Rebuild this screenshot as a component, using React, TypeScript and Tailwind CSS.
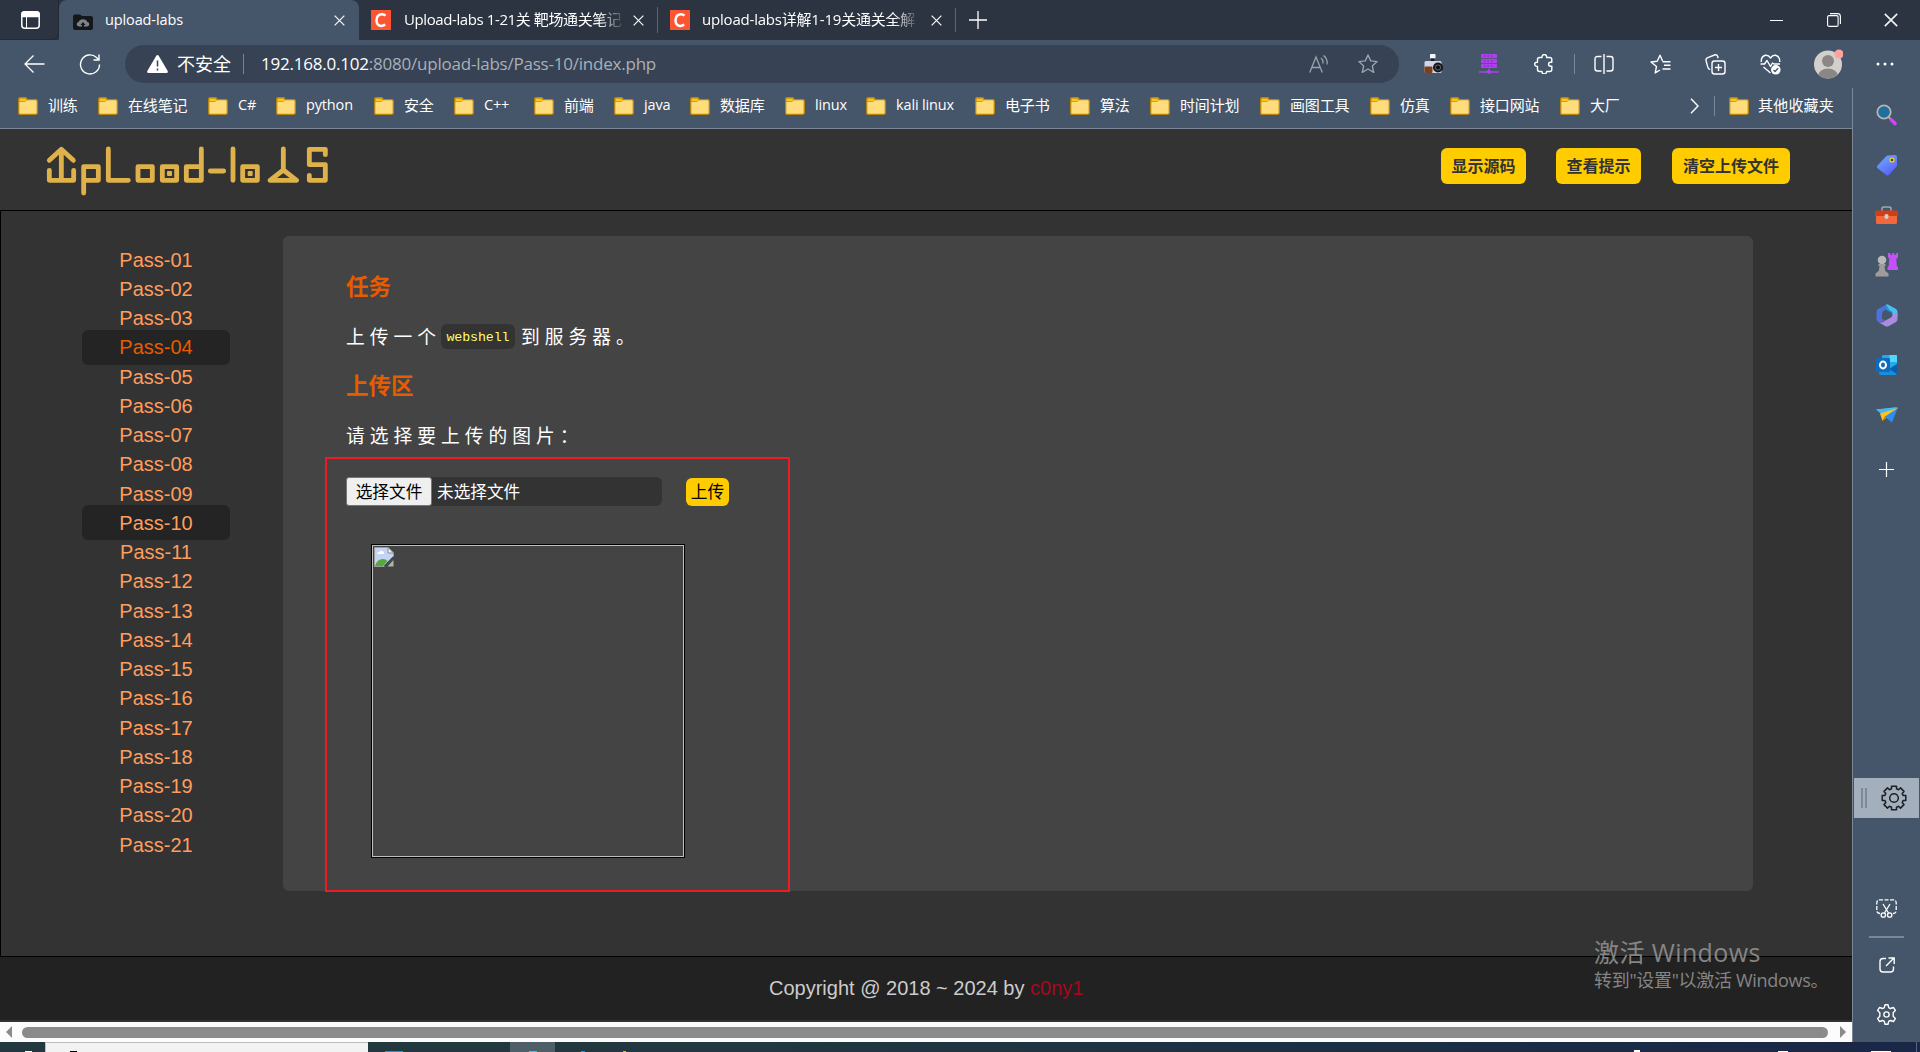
import React from "react";

const UI = "font-['Open_Sans','Noto_Sans_CJK_SC',sans-serif]";
const CJK = "font-['Noto_Sans_CJK_SC',sans-serif]";

const bookmarks = [
  { label: "训练", w: "w-[80px]" },
  { label: "在线笔记", w: "w-[110px]" },
  { label: "C#", w: "w-[68px]" },
  { label: "python", w: "w-[98px]" },
  { label: "安全", w: "w-[80px]" },
  { label: "C++", w: "w-[80px]" },
  { label: "前端", w: "w-[80px]" },
  { label: "java", w: "w-[76px]" },
  { label: "数据库", w: "w-[95px]" },
  { label: "linux", w: "w-[81px]" },
  { label: "kali linux", w: "w-[109px]" },
  { label: "电子书", w: "w-[95px]" },
  { label: "算法", w: "w-[80px]" },
  { label: "时间计划", w: "w-[110px]" },
  { label: "画图工具", w: "w-[110px]" },
  { label: "仿真", w: "w-[80px]" },
  { label: "接口网站", w: "w-[110px]" },
  { label: "大厂", w: "w-[130px]" },
];

const passes = Array.from({ length: 21 }, (_, i) => `Pass-${String(i + 1).padStart(2, "0")}`);

function Folder() {
  return (
    <svg width="20" height="18" viewBox="0 0 20 18" className="shrink-0">
      <path d="M.7 2.200Q.700.700 2 .700h5.200q1 0 1.500.8l.8 1.200h8.300q1.500 0 1.500 1.500v11.600q0 1.500-1.500 1.500H2.200Q.700 17.300.700 15.800z" fill="#ffdc7c" stroke="#b8860b" strokeWidth="1.300" />
      <path d="M1.300 4.500V2.300q0-1 1-1H7q.8 0 1.100.6l.7 1.100-1.200 1.100q-.5.400-1.200.4z" fill="#ffc61a" stroke="#b8860b" strokeWidth=".7" />
    </svg>
  );
}

function Cross({ size = 11, color = "#f2f4f6" }: { size?: number; color?: string }) {
  return (
    <svg width={size} height={size} viewBox="0 0 12 12" fill="none" stroke={color} strokeWidth="1.400">
      <path d="M.7.700l10.600 10.600M11.300.700L.700 11.300" />
    </svg>
  );
}

function SiteIcon() {
  return (
    <svg width="20" height="20" viewBox="0 0 20 20">
      <rect width="20" height="20" fill="#fc5531" />
      <path d="M14.600 5.600Q12.700 4 10.400 4.200 5.800 4.700 5.500 10.200 5.600 15.600 10 15.900q2.300.1 4.200-1.300" fill="none" stroke="#fff" strokeWidth="2.500" />
    </svg>
  );
}

function Slot({ w, children }: { w: string; children: React.ReactNode }) {
  return <div className={`${w} flex shrink-0 items-center justify-center`}>{children}</div>;
}

function TabStrip() {
  return (
    <div className="flex h-10 shrink-0 bg-[#2b3440]">
      <div className="flex w-[59px] items-center justify-center rounded-br-md shadow-[inset_-1px_-1px_0_#222a34]">
        <svg width="19" height="18" viewBox="0 0 19 18" fill="none" stroke="#fff" strokeWidth="1.500" className="ml-px">
          <rect x=".8" y=".8" width="17.400" height="16.400" rx="3" />
          <path d="M1 3q0-2 2-2h13q2 0 2 2v2.500H1z" fill="#fff" />
          <path d="M5.500 5v12" strokeWidth="1" />
        </svg>
      </div>
      <div className="flex w-[300px] items-center rounded-t-lg bg-[#45556a] pr-[14px] pl-[14px]">
        <svg width="20" height="16" viewBox="0 0 20 16" className="mt-1">
          <path d="M0 2.500Q0 .500 2 .500h5l2 1.500h9q2 0 2 2v10q0 2-2 2H2q-2 0-2-2z" fill="#15181b" />
          <path d="M6 12.500q-2.500-.3-2.300-2.500.3-1.800 2-1.900Q6.500 5.300 10 5.300t4.300 2.800q1.700.1 2 1.900.2 2.200-2.300 2.500z" fill="#7d8386" />
          <path d="M10 8l2.600 3H11v3H9v-3H7.400z" fill="#15181b" />
        </svg>
        <span className={`${UI} -mt-px ml-3 flex-1 text-[14.500px] tracking-[-0.120px] text-white`}>upload-labs</span>
        <Cross />
      </div>
      <div className="flex w-[298px] items-center pl-3">
        <SiteIcon />
        <div className={`${UI} -mt-0.5 ml-[13px] w-[221px] overflow-hidden text-[15px] tracking-[-0.400px] whitespace-nowrap text-white [mask-image:linear-gradient(90deg,#000_88%,transparent_100%)]`}>
          Upload-labs 1-21关 靶场通关笔记
        </div>
        <div className="ml-[8px]"><Cross /></div>
      </div>
      <div className="flex w-[299px] items-center border-l border-[#5b6673] pl-3 [border-image:linear-gradient(transparent_20%,#5b6673_20%,#5b6673_80%,transparent_80%)_1]">
        <SiteIcon />
        <div className={`${UI} -mt-0.5 ml-3 w-[218px] overflow-hidden text-[15px] tracking-[-0.200px] whitespace-nowrap text-white [mask-image:linear-gradient(90deg,#000_88%,transparent_100%)]`}>
          upload-labs详解1-19关通关全解
        </div>
        <div className="ml-[11px]"><Cross /></div>
      </div>
      <div className="my-2 -ml-px w-px bg-[#5b6673]" />
      <Slot w="w-[44px]">
        <svg width="18" height="18" viewBox="0 0 18 18" stroke="#fff" strokeWidth="1.300"><path d="M9 0v18M0 9h18" /></svg>
      </Slot>
      <div className="flex-1" />
      <div className="mr-px flex">
        <Slot w="w-[57px]"><div className="h-px w-[13px] bg-white" /></Slot>
        <Slot w="w-[57px]">
          <svg width="14" height="14" viewBox="0 0 14 14" fill="none" stroke="#fff" strokeWidth="1.100">
            <rect x=".6" y="2.600" width="10.500" height="10.800" rx="1.500" />
            <path d="M3 .600h7.500q2.900 0 2.900 2.900V11" />
          </svg>
        </Slot>
        <Slot w="w-[57px]"><Cross size={14} /></Slot>
      </div>
    </div>
  );
}

const gearPath = "M8.700 1.500h2.600l.6 2.500 1.500.8 2.600-.9 1.700 2.600-1.900 1.900v3.200l1.900 1.900-1.700 2.600-2.600-.9-1.500.8-.6 2.500H8.700l-.6-2.500-1.500-.8-2.600.9-1.700-2.600 1.900-1.900V8.400L2.300 6.500 4 3.900l2.600.9 1.500-.8z";

function Toolbar() {
  return (
    <div className="flex h-12 shrink-0 items-center bg-[#45556a] pl-1.5">
      <Slot w="w-[57px]">
        <svg width="21" height="18" viewBox="0 0 21 18" fill="none" stroke="#fff" strokeWidth="1.300"><path d="M20.500 9H1M9.500.5L1 9l8.500 8.500" /></svg>
      </Slot>
      <Slot w="w-[54px]">
        <svg width="22" height="21" viewBox="0 0 22 21" fill="none" stroke="#fff" strokeWidth="1.400"><path d="M20.500 10.500a9.500 9.500 0 1 1-3-7l2.200 2.200M20 .5v5.500h-5.500" /></svg>
      </Slot>
      <div className="ml-2 flex h-[38px] w-[1274px] items-center rounded-full bg-[#374354] pl-[22px]">
        <svg width="21" height="18" viewBox="0 0 21 18"><path d="M9.300.8q1.200-1.500 2.400 0l9 15.200q.6 2-1.200 2H1.500q-1.800 0-1.200-2z" fill="#fff" /><path d="M10.500 5.500v6M10.500 13.500v2" stroke="#374354" strokeWidth="1.500" /></svg>
        <span className={`${CJK} -mt-0.5 ml-[9px] text-[18px] leading-6 text-white`}>不安全</span>
        <div className="ml-3 h-5 w-px bg-[#7b8592]" />
        <div className={`${UI} ml-[17px] flex-1 text-[17px] leading-6 tracking-[-0.220px] text-[#a9b0b8]`}>
          <span className="text-white">192.168.0.102</span>:8080/upload-labs/Pass-10/index.php
        </div>
        <Slot w="w-[49px]">
          <svg width="20" height="18" viewBox="0 0 20 18" fill="none" stroke="#9aa3ae" strokeWidth="1.300"><path d="M.700 17.500L7 2l6.300 15.500M3 12.500h8M12 3q2.500 2 2 5.500M14.500.5q4.500 3.500 3.500 9" /></svg>
        </Slot>
        <div className="mr-[6px]">
          <Slot w="w-[50px]">
            <svg width="20" height="20" viewBox="0 0 20 20" fill="none" stroke="#9aa3ae" strokeWidth="1.400" strokeLinejoin="round"><path d="M10 1l2.700 5.900 6.400.7-4.800 4.300 1.400 6.400L10 15l-5.700 3.300 1.400-6.400L.9 7.600l6.400-.7z" /></svg>
          </Slot>
        </div>
      </div>
      <div className="ml-[7px] flex items-center">
        <Slot w="w-[55px]">
          <svg width="20" height="20" viewBox="0 0 20 20">
            <rect x="6" y="0" width="5.500" height="4.500" rx=".8" fill="#f5f6fa" />
            <rect x="7" y="4.500" width="3.500" height="2.500" fill="#1b1c20" />
            <rect x=".5" y="7" width="17" height="12" rx="1.500" fill="#d3d5e6" />
            <rect x=".5" y="12.500" width="8" height="6.500" rx="1" fill="#7d401f" />
            <circle cx="14" cy="13.500" r="5" fill="#17181c" />
            <circle cx="14" cy="13.500" r="3" fill="#596070" /><circle cx="14" cy="13.500" r="2" fill="#090a0c" />
          </svg>
        </Slot>
        <Slot w="w-[56px]">
          <svg width="20" height="20" viewBox="0 0 20 20" fill="#ae3fec">
            <rect x="2" y="0" width="16" height="4.200" rx=".8" /><rect x="2" y="4.900" width="16" height="4.200" rx=".8" /><rect x="2" y="9.800" width="16" height="4.200" rx=".8" />
            <path d="M9.500 13h1v4h-1zM0 17.300h20v1.400H0z" /><circle cx="10" cy="17.800" r="2.100" />
            <path d="M5 2h10M5 7h10M5 12h10" stroke="#5b3a85" strokeDasharray="1.500 2" strokeWidth="1" />
          </svg>
        </Slot>
        <Slot w="w-[57px]">
          <svg width="20" height="20" viewBox="0 0 20 20" fill="none" stroke="#fff" strokeWidth="1.400" strokeLinejoin="round" className="mr-1">
            <path d="M8 3.500v-.7a2.300 2.300 0 0 1 4.600 0v.7h3.200q2 0 2 2v2.800h-1.200a2 2 0 0 0 0 4h1.200v3.200q0 2-2 2h-3.200v.2a2.300 2.300 0 0 1-4.600 0v-.2H5.500q-2 0-2-2v-3.100h-.7a2.100 2.100 0 0 1 0-4.200h.7V5.500q0-2 2-2z" />
          </svg>
        </Slot>
        <div className="h-5 w-px bg-[#7b8796]" />
        <Slot w="w-[58px]">
          <svg width="20" height="20" viewBox="0 0 20 20" fill="none" stroke="#fff" strokeWidth="1.400">
            <path d="M7.500 2.500h-4q-2.500 0-2.500 2.500v9.500Q1 17 3.500 17h4M12.500 2.500h4Q19 2.500 19 5v9.500q0 2.500-2.500 2.500h-4M10 0v20" />
          </svg>
        </Slot>
        <Slot w="w-[54px]">
          <svg width="21" height="20" viewBox="0 0 21 20" fill="none" stroke="#fff" strokeWidth="1.400" strokeLinejoin="round">
            <path d="M12.500 7.700H20.500M14 11.300H20.500M12.500 15H20.500M10 16l-4.800 2.800L6.500 12.500 1 8l6.200-.7L10 1.200l2.600 5.800" />
          </svg>
        </Slot>
        <Slot w="w-[56px]">
          <svg width="21" height="21" viewBox="0 0 21 21" fill="none" stroke="#fff" strokeWidth="1.400" strokeLinejoin="round">
            <rect x="7" y="7" width="13" height="13" rx="2.500" />
            <path d="M13.500 10v7M10 13.500h7M5.200 15.500q-2-.4-2.400-2.400L1 6.500Q.6 4.300 2.800 3.600L9.500 1q2.500-.7 3.200 1.500l.5 1.700" />
          </svg>
        </Slot>
        <Slot w="w-[55px]">
          <svg width="21" height="21" viewBox="0 0 21 21" fill="none" stroke="#fff" strokeWidth="1.400" strokeLinejoin="round">
            <path d="M1.300 8Q.8 2.500 5.500 1.300 8.500 1 10.500 4q2-3 5-2.700Q20.200 2.500 19.700 8M.5 10h4L7 6.500l3.500 6 2-3.500 1.500 1h6M3.500 13l7 6" />
            <circle cx="15.800" cy="15.800" r="4.800" fill="#fff" stroke="none" />
            <path d="M13.500 16l1.600 1.500 3-3.400" stroke="#45556a" />
          </svg>
        </Slot>
        <Slot w="w-[60px]">
          <svg width="30" height="30" viewBox="0 0 30 30">
            <defs><clipPath id="avatar"><circle cx="15" cy="15.500" r="14" /></clipPath></defs>
            <circle cx="15" cy="15.500" r="14" fill="#d2d0cd" />
            <circle cx="15" cy="12" r="6" fill="#8a8785" />
            <ellipse cx="15" cy="27" rx="10" ry="7.500" fill="#8a8785" clipPath="url(#avatar)" />
            <circle cx="26" cy="5" r="4.600" fill="#ffa39c" />
          </svg>
        </Slot>
        <Slot w="w-[54px]">
          <svg width="18" height="4" viewBox="0 0 18 4" fill="#fff"><circle cx="2" cy="2" r="1.500" /><circle cx="9" cy="2" r="1.500" /><circle cx="16" cy="2" r="1.500" /></svg>
        </Slot>
      </div>
    </div>
  );
}

function BookmarkBar() {
  return (
    <div className={`${UI} flex h-[41px] shrink-0 items-center border-b border-[#7b8796] bg-[#45556a] pb-[5px] pl-[18px] text-[15px] tracking-[-0.150px] text-white`}>
      {bookmarks.map((b) => (
        <div key={b.label} className={`${b.w} flex shrink-0 items-center gap-[10px] whitespace-nowrap`}>
          <Folder />
          <span className={`-mt-0.5 leading-5 ${b.label.charCodeAt(0) < 128 ? "text-[14.500px]" : ""}`}>{b.label}</span>
        </div>
      ))}
      <svg width="9" height="16" viewBox="0 0 9 16" fill="none" stroke="#fff" strokeWidth="1.400"><path d="M1 .7L8 8l-7 7.300" /></svg>
      <div className="mx-[15px] h-5 w-px bg-[#7b8796]" />
      <div className="-ml-px flex items-center gap-[9px]">
        <Folder />
        <span className="-mt-0.5 leading-5 tracking-[0.200px] whitespace-nowrap">其他收藏夹</span>
      </div>
    </div>
  );
}

function Logo() {
  return (
    <svg width="300" height="70" viewBox="0 0 900 210" fill="none" stroke="#deb14a" strokeWidth="14.500" strokeLinejoin="round" strokeLinecap="round">
      <path d="M64 40V133M28 73L64 40l36 33M28 103v30H101v-30" />
      <path d="M131 171V92h44v41h-44" />
      <path d="M205 39v94h60" />
      <rect x="294" y="92" width="43" height="41" />
      <rect x="367" y="92" width="43" height="41" />
      <rect x="381" y="105" width="15" height="15" rx="3" fill="#deb14a" stroke="none" />
      <path d="M484 39v94h-45V92h45" />
      <path d="M511 105h40M579 39v94" />
      <rect x="608" y="92" width="44" height="41" />
      <rect x="623" y="105" width="15" height="15" rx="3" fill="#deb14a" stroke="none" />
      <path d="M730 39v63M730 102l-40 31h80z" />
      <path d="M856 56V40h-48v46h48v47h-48v-15" />
    </svg>
  );
}

function HeaderButton({ label, w }: { label: string; w: string }) {
  return (
    <button className={`${CJK} ${w} h-9 rounded-[6px] bg-[#ffcc00] pb-0.5 text-[16px] leading-6 font-bold text-[#333]`}>{label}</button>
  );
}

function BrokenImage() {
  return (
    <svg width="20" height="20" viewBox="0 0 20 20">
      <path d="M.5.500h13.500l5.500 5.500v5L11 19.500H.500z" fill="#c3d5f5" stroke="#9b9b9b" />
      <path d="M14 .500V6h5.500z" fill="#f4f4f4" stroke="#8c8c8c" />
      <path d="M3 7q0-2 2.500-2 1-2 3-1t1.500 3z" fill="#fff" />
      <path d="M1 19q2-7 8-7 3 0 4.500 2L9 19z" fill="#57a83a" />
      <path d="M19.500 13v6.500H13.500z" fill="#a9b9a6" />
      <path d="M19.800 10L10.500 19.500" stroke="#444" strokeWidth="2" />
    </svg>
  );
}

function Page() {
  return (
    <div className="flex w-[1852px] flex-col bg-[#333]">
      <header className="flex h-[82px] shrink-0 border-b border-black pt-[7px] pl-10">
        <Logo />
        <div className="ml-[1101px] flex pt-3">
          <HeaderButton label="显示源码" w="w-[85px]" />
          <div className="ml-[30px]"><HeaderButton label="查看提示" w="w-[85px]" /></div>
          <div className="ml-[31px]"><HeaderButton label="清空上传文件" w="w-[118px]" /></div>
        </div>
      </header>
      <main className="flex h-[745px] shrink-0 border-l border-black">
        <ul className="mt-[34px] ml-[81px] w-[148px] text-center font-['Liberation_Sans',sans-serif] text-[20px]">
          {passes.map((p, i) => (
            <li key={p} className="flex h-[29.25px] items-center">
              <a
                className={`-my-1 flex h-[35px] w-full shrink-0 items-center justify-center rounded-[6px] ${i === 3 ? "bg-[#242424] text-[#e65c00]" : i === 9 ? "bg-[#242424] text-[#ff9d5c]" : "text-[#ff9d5c]"}`}
              >
                {p}
              </a>
            </li>
          ))}
        </ul>
        <section className={`${CJK} mt-[25px] ml-[53px] h-[655px] w-[1470px] rounded-[6px] bg-[#444] pl-[63px] text-white`}>
          <h3 className="pt-[32px] text-[22.500px] leading-[34px] font-bold text-[#e65c00]">任务</h3>
          <p className="mt-[20px] flex h-[28px] items-center text-[18.750px] leading-7 tracking-[5px]">
            上传一个
            <code className="mt-px mr-[6px] flex h-[25px] w-[74px] items-center justify-center rounded-[6px] bg-[#333] pt-[3px] font-['Liberation_Mono',monospace] text-[13.300px] tracking-[-0.100px] text-[#ffff66]">webshell</code>
            到服务器。
          </p>
          <h3 className="mt-[17px] text-[22.500px] leading-[34px] font-bold text-[#e65c00]">上传区</h3>
          <p className="mt-[20px] h-7 text-[18.750px] leading-7 tracking-[5px]">请选择要上传的图片：</p>
          <div className="-ml-[21px] pt-[8px]">
            <div className="h-[435px] w-[465px] border-2 border-[#ed1c24] pt-[18px] pl-[19px]">
              <div className="flex text-[16.670px] leading-6">
                <div className="flex h-[29px] w-[316px] items-center rounded-[6px] bg-[#333]">
                  <button className="flex h-[29px] w-[86px] items-center justify-center rounded-[3px] border border-[#767676] bg-[#efefef] pb-0.5 text-black">选择文件</button>
                  <span className="ml-[5px] pb-0.5">未选择文件</span>
                </div>
                <button className="mt-px ml-6 h-7 w-[43px] rounded-[6px] bg-[#ffcc00] pb-0.5 text-[16.670px] leading-6 text-black">上传</button>
              </div>
              <div className="mt-[38px] ml-[25px] h-[314px] w-[314px] border border-black">
                <div className="h-full w-full border border-[#c0c0c0] p-px">
                  <BrokenImage />
                </div>
              </div>
            </div>
          </div>
        </section>
      </main>
      <footer className="h-[66px] shrink-0 border-t border-b-2 border-t-black border-b-[#333] bg-[#222] pt-[17px] pl-[769px] font-['Liberation_Sans',sans-serif] text-[20px] leading-7 text-[#ccc]">
        Copyright @ 2018 ~ 2024 by <span className="text-[#a8071f]">c0ny1</span>
      </footer>
      <div className="flex h-5 shrink-0 items-center bg-[#fcfcfc] pl-[6px]">
        <svg width="6" height="12" viewBox="0 0 6 12" fill="#8b8b8b"><path d="M6 0v12L0 6z" /></svg>
        <div className="ml-[10px] h-[11px] w-[1806px] rounded-full bg-[#8b8b8b]" />
        <svg width="6" height="12" viewBox="0 0 6 12" fill="#8b8b8b" className="ml-3"><path d="M0 0v12l6-6z" /></svg>
      </div>
    </div>
  );
}

function SideItem({ children }: { children: React.ReactNode }) {
  return <div className="flex h-[50px] shrink-0 items-center justify-center">{children}</div>;
}

function SideBar() {
  return (
    <aside className="flex flex-1 flex-col border-l border-[#7b8796] bg-[#45556a] pt-0.5">
      <SideItem>
        <svg width="20" height="20" viewBox="0 0 20 20" className="overflow-visible">
          <path d="M11.500 12l3 3" stroke="#aaa" strokeWidth="2" />
          <path d="M14.500 15l3.500 3.500" stroke="#d543f5" strokeWidth="3.600" strokeLinecap="round" />
          <circle cx="7" cy="7" r="6.700" fill="#1f6f9f" stroke="#b5b3b0" strokeWidth="1.800" />
        </svg>
      </SideItem>
      <SideItem>
        <svg width="22" height="22" viewBox="0 0 22 22">
          <defs><linearGradient id="tag" x1="0" y1="0" x2=".6" y2="1"><stop stopColor="#70b0ff" /><stop offset="1" stopColor="#5b62f5" /></linearGradient></defs>
          <path d="M12 1.500l7-.5q2 0 2 2v8q0 1-.8 2l-7.500 8q-1.200 1-2.400 0L1.300 14q-1-1.200 0-2.300L10 2.500q1-.900 2-1z" fill="url(#tag)" />
          <circle cx="16" cy="6" r="2.600" fill="#ffd500" /><circle cx="16" cy="6" r="1.300" fill="#4a3a3a" />
        </svg>
      </SideItem>
      <SideItem>
        <svg width="23" height="18" viewBox="0 0 23 18">
          <path d="M7 5V2.500Q7 1 9 1h5q2 0 2 1.500V5" fill="none" stroke="#a6a6a6" strokeWidth="1.500" />
          <rect x="1" y="8" width="21" height="10" rx="1.500" fill="#f0683c" />
          <path d="M0 6.500Q0 4.500 2 4.500h19q2 0 2 2V10H0z" fill="#cf3f14" />
          <rect x="9.500" y="8" width="4" height="5" rx="2" fill="#d0d0d0" />
        </svg>
      </SideItem>
      <SideItem>
        <svg width="23" height="24" viewBox="0 0 23 24">
          <path d="M13 0h2.200v1.800h2V0h2v1.800h2V0H23v4.500l-1.700 1.300.5 7.200 1.200 1v3H12.500v-3l1.200-1 .5-7.200L13 4.500z" fill="#c252f5" />
          <circle cx="7" cy="7" r="4.300" fill="#b9b7b5" />
          <path d="M3.500 11h7v2H9.500l.8 5 3.200 2.500v3H.5v-3L3.700 18l.8-5h-1z" fill="#9f9d9b" />
        </svg>
      </SideItem>
      <SideItem>
        <svg width="22" height="23" viewBox="0 0 22 23">
          <path d="M10.500.500L2 5Q.500 6 .500 7.500v7.500q0 2 1.500 2.800l1.500.9q2 .8 2.500-2.200V10q0-2 1.500-3l3-2z" fill="#4e72dc" />
          <path d="M10 .700q1-.7 2.500 0l7.500 4.300q1.500 1 1.500 2.500v5L16.500 10.500V9.500q0-1.500-1-2L10 4.500z" fill="#45c2ee" />
          <path d="M10 .700v5L16.500 9.500 13 5z" fill="#2d8fd8" />
          <path d="M21.500 10v5q0 2-1.500 3l-7 4q-2 1-4 0l-6-3.500q4 .5 5.500-1.500l6.500-3.500q1.500-1 1.500-3V9z" fill="#a98be0" />
          <path d="M5.500 15v4l-2-.5Q7 18 9 16z" fill="#7d5fc0" />
        </svg>
      </SideItem>
      <SideItem>
        <svg width="22" height="22" viewBox="0 0 22 22">
          <rect x="6" y="1" width="15" height="15" rx="1" fill="#28a8ea" /><path d="M13.500 1H20q1 0 1 1v6h-7.500z" fill="#50d9ff" />
          <path d="M3 12l10 3 8-5v9q0 2-2 2H5q-2 0-2-2z" fill="#1490df" /><path d="M21 10v10l-8-5z" fill="#0a5ea8" />
          <rect x="0" y="4" width="14" height="14" rx="1.300" fill="#0f6cbd" />
          <ellipse cx="7" cy="11" rx="3" ry="3.400" fill="none" stroke="#fff" strokeWidth="2" />
        </svg>
      </SideItem>
      <SideItem>
        <svg width="22" height="16" viewBox="0 0 22 16">
          <path d="M0 2.500L22 0 9 7z" fill="#50c8f5" /><path d="M22 0l-6 15.500L8 9z" fill="#2f8cf0" />
          <path d="M0 2.500L22 1 7 8.500z" fill="#45b8ef" /><path d="M4 6.500L22 1 9 9.500 6.500 14z" fill="#ffc21a" /><path d="M9 9.500L6.500 14l4-3z" fill="#e08a00" />
        </svg>
      </SideItem>
      <div className="flex h-[58px] items-center justify-center pr-px">
        <svg width="15" height="15" viewBox="0 0 15 15" stroke="#fff" strokeWidth="1.200"><path d="M7.500 0v15M0 7.500h15" /></svg>
      </div>
      <div className="mt-[280px] mr-px ml-px flex h-10 shrink-0 items-center bg-[#a3afbd] pl-[7px]">
        <div className="h-5 w-[6px] border-x-2 border-[#808994]" />
        <svg width="26" height="26" viewBox="0 0 26 26" className="ml-[14px]" fill="none" stroke="#1c1f23" strokeWidth="1.500" strokeLinejoin="round">
          <circle cx="13" cy="13" r="4.300" />
          <path d="M10.500 1.200h5v2.600l2 .9 2-1.800 3.500 3.500-1.800 2 .9 2.100h2.700v5h-2.700l-.9 2.100 1.800 2-3.500 3.500-2-1.800-2 .9v2.600h-5v-2.600l-2-.9-2 1.800L3 19.600l1.800-2-.9-2.100H1.200v-5h2.700l.9-2.100-1.800-2L6.500 2.900l2 1.800 2-.9z" />
        </svg>
      </div>
      <div className="mt-[68px] flex h-11 shrink-0 items-center justify-center">
        <svg width="21" height="19" viewBox="0 0 21 19" fill="none" stroke="#fff" strokeWidth="1.300">
          <path d="M4 14.500q-3.200 0-3.200-3V4Q.8.800 4 .800h13q3.200 0 3.200 3.200v7.500q0 3-3.200 3" strokeDasharray="4 1.500" />
          <path d="M7 5l5.500 9M14 5l-5.500 9" /><circle cx="7.300" cy="16" r="2.200" /><circle cx="13.700" cy="16" r="2.200" />
        </svg>
      </div>
      <div className="flex h-[14px] shrink-0 items-center justify-center"><div className="h-0.5 w-[35px] bg-[#7b8796]" /></div>
      <div className="flex h-[42px] shrink-0 items-center justify-center">
        <svg width="16" height="16" viewBox="0 0 16 16" fill="none" stroke="#fff" strokeWidth="1.400"><path d="M7 1.500H4Q1 1.500 1 4.500V12q0 3 3 3h7.500q3 0 3-3V9.500M9.500 1H15.200v6M15 1L7 9" /></svg>
      </div>
      <div className="flex h-14 shrink-0 items-center justify-center">
        <svg width="23" height="23" viewBox="0 0 20 20" fill="none" stroke="#fff" strokeWidth="1.200" strokeLinejoin="round"><path d={gearPath} /><circle cx="10" cy="10" r="2.300" /></svg>
      </div>
    </aside>
  );
}

function TaskBar() {
  return (
    <div className="flex h-[10px] shrink-0 items-end overflow-hidden bg-[linear-gradient(90deg,#21383f_0%,#213840_40%,#1b3044_68%,#1a2747_100%)]">
      <div className="ml-[25px] h-px w-[7px] bg-white" />
      <div className="ml-[13px] flex h-full w-[323px] items-end border-t border-l border-[#bdbdbd] bg-[#f2f2f2] pl-6"><div className="h-px w-[7px] bg-black" /></div>
      <div className="ml-[17px] h-px w-[18px] bg-[#2492e8]" />
      <div className="ml-[107px] flex h-full w-[45px] items-end justify-center bg-[#4e5f68]"><div className="h-px w-2 bg-[#2bd0e0]" /></div>
      <div className="ml-[26px] h-px w-1 bg-[#2492e8]" />
      <div className="ml-[38px] h-px w-[3px] bg-[#d8c020]" />
      <div className="ml-[1008px] h-0.5 w-[6px] bg-white" />
      <div className="ml-[138px] h-px w-[10px] bg-white" />
      <div className="ml-[83px] h-px w-5 bg-white" />
      <div className="ml-[25px] h-full w-px bg-[#59657c]" />
    </div>
  );
}

export default function App() {
  return (
    <div className="relative flex h-[1052px] w-[1920px] flex-col overflow-hidden bg-[#45556a]">
      <TabStrip />
      <Toolbar />
      <div className="flex h-[954px] shrink-0">
        <div className="flex w-[1852px] flex-col">
          <BookmarkBar />
          <Page />
        </div>
        <SideBar />
      </div>
      <TaskBar />
      <div className={`${UI} pointer-events-none absolute top-[935px] left-[1594px] whitespace-nowrap text-[#858585]`}>
        <div className="text-[25px] leading-[34px] tracking-[0.400px]">激活 Windows</div>
        <div className="text-[18px] leading-[22px] tracking-[-0.300px]">转到"设置"以激活 Windows。</div>
      </div>
    </div>
  );
}
